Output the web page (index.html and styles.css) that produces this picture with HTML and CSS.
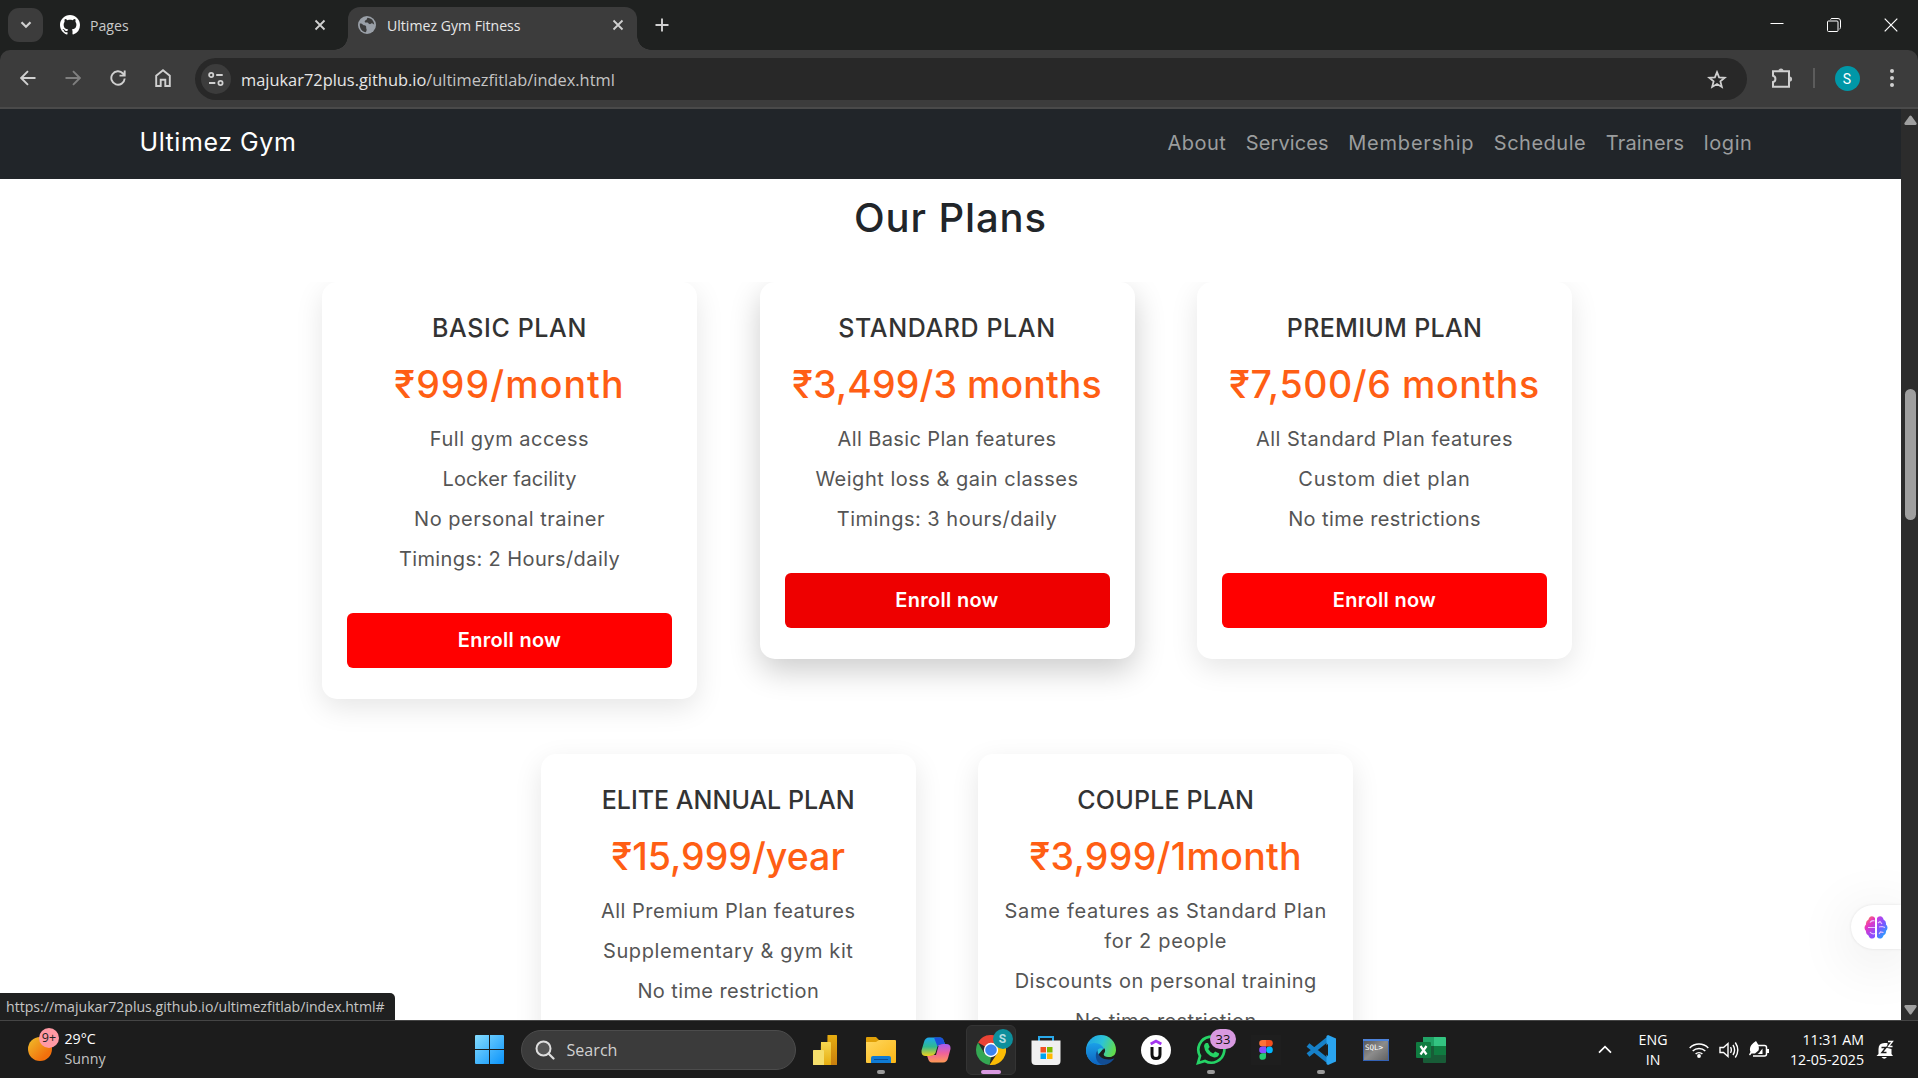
FILE: index.html
```html
<!DOCTYPE html>
<html lang="en">
<head>
<meta charset="utf-8">
<title>Ultimez Gym Fitness</title>
<link rel="stylesheet" href="styles.css">
</head>
<body>
<header class="tabstrip">
  <div class="tab-search"><svg width="12" height="8" viewBox="0 0 12 8"><path d="M1.5 1.2 6 5.7l4.500-4.500" class="ln" stroke-width="2.200"/></svg></div>
  <div class="tab tab-idle">
    <svg class="fav" width="20" height="20" viewBox="0 0 16 16"><path fill="#fff" d="M8 0C3.580 0 0 3.580 0 8c0 3.540 2.290 6.530 5.470 7.590.4.070.55-.17.55-.38 0-.19-.01-.82-.01-1.490-2.010.37-2.530-.49-2.690-.94-.09-.23-.48-.94-.82-1.130-.28-.15-.68-.52-.01-.53.63-.01 1.080.58 1.230.82.72 1.210 1.870.87 2.330.66.070-.52.28-.87.51-1.070-1.780-.2-3.640-.89-3.640-3.950 0-.87.31-1.590.82-2.150-.08-.2-.36-1.020.08-2.120 0 0 .67-.21 2.200.82.64-.18 1.320-.27 2-.27s1.360.09 2 .27c1.530-1.040 2.200-.82 2.200-.82.44 1.100.16 1.920.08 2.120.51.56.82 1.270.82 2.150 0 3.070-1.870 3.750-3.650 3.950.29.25.54.73.54 1.480 0 1.070-.01 1.930-.01 2.200 0 .21.15.46.55.38A8.010 8.010 0 0 0 16 8c0-4.420-3.580-8-8-8z"/></svg>
    <span class="tab-title">Pages</span>
    <svg width="12" height="12" viewBox="0 0 12 12"><path d="M1.500 1.500l9 9m0-9l-9 9" class="ln" stroke-width="1.800"/></svg>
  </div>
  <div class="tab tab-active">
    <svg class="fav" width="18" height="18" viewBox="0 0 18 18"><circle cx="9" cy="9" r="9" fill="#9aa0a8"/><path fill="#3c3c3c" d="M1.800 7.500c1.500-.4 2.400.2 3.200 1.300.7.900 2.200.3 2.900 1.200.7 1-.1 2 .6 3 .4.800 0 2-.6 3.200C4.500 16 1.300 12.500 1.800 7.500zM9.500 1.800c-1 1-.2 1.700-1.300 2.300-1 .5-1.700.8-1.400 1.900.2 1 1.700.4 2.600.5 1 .2 1 1.300 2.100 1.600 1.200.4 1.300-1 2.400-.8.900.1 1.700.8 2.300 1.500C16 4.900 13.400 2 9.500 1.800z"/></svg>
    <span class="tab-title">Ultimez Gym Fitness</span>
    <svg width="12" height="12" viewBox="0 0 12 12"><path d="M1.500 1.500l9 9m0-9l-9 9" class="ln" stroke-width="1.800"/></svg>
  </div>
  <svg class="new-tab" width="14" height="14" viewBox="0 0 14 14"><path d="M7 .5v13M.5 7h13" class="ln" stroke-width="1.900"/></svg>
  <div class="window-buttons">
    <svg width="14" height="14" viewBox="0 0 14 14"><path d="M.5 5.500h13" stroke="#fff" fill="none"/></svg>
    <svg width="14" height="14" viewBox="0 0 14 14"><path d="M3.500 1.500q.3-1 1.500-1h6q2.500 0 2.500 2.500v6.500q0 1.200-1 1.500" stroke="#fff" fill="none"/><rect x=".5" y="3" width="10.500" height="10.500" rx="1" stroke="#fff" fill="none"/></svg>
    <svg width="14" height="14" viewBox="0 0 14 14"><path d="M.7.700l12.600 12.600m0-12.600L.7 13.300" stroke="#fff" stroke-width="1.200" fill="none"/></svg>
  </div>
</header>

<div class="toolbar">
  <div class="tool"><svg width="16" height="16" viewBox="0 0 16 16"><path d="M15.500 8H1.500M8 1.200 1.200 8 8 14.800" class="ln" stroke-width="1.900"/></svg></div>
  <div class="tool dim"><svg width="16" height="16" viewBox="0 0 16 16"><path d="M.5 8h14M8 1.200 14.800 8 8 14.800" class="ln" stroke-width="1.900"/></svg></div>
  <div class="tool"><svg width="16" height="16" viewBox="0 0 16 16"><path d="M14.700 8.500A6.700 6.700 0 1 1 13 3.500l1.500 1.600M14.700.5V5.600H9.500" class="ln" stroke-width="1.900"/></svg></div>
  <div class="tool"><svg width="16" height="18" viewBox="0 0 16 18"><path d="M1.200 17V6.800L8 1.300l6.800 5.500V17H10.300V10.800H5.700V17z" class="ln" stroke-width="1.900"/></svg></div>
  <div class="omnibox">
    <div class="site-info"><svg width="16" height="14" viewBox="0 0 16 14"><g class="ln" stroke-width="1.800"><circle cx="3.200" cy="3" r="2.100"/><path d="M8.200 3h6.500M1 11h6.300"/><circle cx="12.500" cy="11" r="2.100"/></g></svg></div>
    <span class="url">majukar72plus.github.io<span class="url-path">/ultimezfitlab/index.html</span></span>
    <svg class="star" width="20" height="19" viewBox="0 0 20 19"><path d="M10 2.200l2.100 5.200 5.600.4-4.300 3.600 1.400 5.500L10 14l-4.800 2.900 1.400-5.500L2.300 7.800l5.600-.4z" class="ln" stroke-width="1.800"/></svg>
  </div>
  <svg class="puzzle" width="22" height="22" viewBox="0 0 22 22"><path d="M2 4.300H18V19.700H2V15a3.200 3.200 0 0 0 0-6.200z" class="ln" stroke-width="2"/><path fill="#c7c7c7" d="M7.500 4a2.500 2.600 0 0 1 5 0zM18.500 9.400a2.600 2.600 0 0 1 0 5.200z"/></svg>
  <i class="divider"></i>
  <div class="avatar">S</div>
  <svg class="dots" width="4" height="18" viewBox="0 0 4 18"><g fill="#d0d0d0"><circle cx="2" cy="2" r="2"/><circle cx="2" cy="9" r="2"/><circle cx="2" cy="16" r="2"/></g></svg>
</div>

<div class="viewport">
  <div class="page">
    <nav class="site-nav">
      <span class="brand">Ultimez Gym</span>
      <div class="links"><a class="ls-5">About</a><a class="ls-1">Services</a><a class="ls-8">Membership</a><a class="ls-5">Schedule</a><a class="ls-2">Trainers</a><a class="ls-6">login</a></div>
    </nav>
    <h2 class="heading">Our Plans</h2>
    <div class="plans">
      <article class="card">
        <h3 class="ls-6">BASIC PLAN</h3>
        <p class="price ls-11">₹999/month</p>
        <ul><li class="ls-5">Full gym access</li><li class="ls-1">Locker facility</li><li class="ls-5">No personal trainer</li><li class="ls-4">Timings: 2 Hours/daily</li></ul>
        <a class="enroll">Enroll now</a>
      </article>
      <article class="card lifted">
        <h3 class="ls-6">STANDARD PLAN</h3>
        <p class="price ls-1">₹3,499/3 months</p>
        <ul><li class="ls-4">All Basic Plan features</li><li class="ls-5">Weight loss &amp; gain classes</li><li class="ls-5">Timings: 3 hours/daily</li></ul>
        <a class="enroll hovered">Enroll now</a>
      </article>
      <article class="card">
        <h3 class="ls-3">PREMIUM PLAN</h3>
        <p class="price ls-6">₹7,500/6 months</p>
        <ul><li class="ls-5">All Standard Plan features</li><li class="ls-8">Custom diet plan</li><li class="ls-4">No time restrictions</li></ul>
        <a class="enroll">Enroll now</a>
      </article>
      <article class="card">
        <h3>ELITE ANNUAL PLAN</h3>
        <p class="price">₹15,999/year</p>
        <ul><li class="ls-5">All Premium Plan features</li><li class="ls-6">Supplementary &amp; gym kit</li><li class="ls-4">No time restriction</li></ul>
      </article>
      <article class="card">
        <h3 class="ls-2">COUPLE PLAN</h3>
        <p class="price ls-3">₹3,999/1month</p>
        <ul><li class="ls-7">Same features as Standard Plan<br>for 2 people</li><li class="ls-5">Discounts on personal training</li><li class="ls-4">No time restriction</li></ul>
      </article>
    </div>
  </div>
  <div class="scrollbar">
    <svg width="13" height="10" viewBox="0 0 13 10"><path d="M5.500 1q1-1.200 2 0l5 7q.6 1.500-1 2H1.500Q-.1 9.500.5 8z" fill="#9f9f9f"/></svg>
    <i class="thumb"></i>
    <svg width="13" height="10" viewBox="0 0 13 10"><path d="M5.500 9q1 1.200 2 0l5-7q.6-1.500-1-2H1.500Q-.1.500.5 2z" fill="#9f9f9f"/></svg>
  </div>
  <div class="brain">
    <svg width="24" height="23" viewBox="0 0 24 23"><defs><linearGradient id="bl" x1="0" y1="0" x2=".5" y2="1"><stop offset="0" stop-color="#ff9a2e"/><stop offset=".45" stop-color="#e835c0"/><stop offset="1" stop-color="#8a4dff"/></linearGradient><linearGradient id="br" x1="0" y1="0" x2=".6" y2="1"><stop offset="0" stop-color="#d43be0"/><stop offset=".5" stop-color="#7a55ff"/><stop offset="1" stop-color="#22a6ff"/></linearGradient></defs><path fill="url(#bl)" d="M11 2v19q-2 2.500-5 1-1-1-1.500-2.500Q1.500 18 2 15-1 11.500 2 8.500 1.500 5 4.500 3.500 5 .5 8 .3 10 .3 11 2z"/><path fill="url(#br)" d="M13 2v19q2 2.500 5 1 1-1 1.500-2.500Q22.500 18 22 15q3-3.500 0-6.500.5-3.500-2.500-5Q19 .5 16 .3 14 .3 13 2z"/><path d="M10.500 5Q8 4 6 6.500M4 11.500h7M6 16q2 2.500 5 1.500M14 7l2-1.500L18 8M15 11l3-.5 3 1M15 18l1.500-2 3 .5" stroke="#e9c4ff" stroke-width="1.200" fill="none"/></svg>
  </div>
  <div class="status">https://majukar72plus.github.io/ultimezfitlab/index.html#</div>
</div>

<footer class="taskbar">
  <div class="weather">
    <div class="sun"><i class="badge">9+</i></div>
    <div class="lines"><span class="bright">29°C</span><span class="soft">Sunny</span></div>
  </div>
  <svg class="start" width="29" height="29" viewBox="0 0 29 29"><defs><linearGradient id="w" x1="0" y1="0" x2="1" y2="1" gradientUnits="objectBoundingBox"><stop offset="0" stop-color="#85dcff"/><stop offset="1" stop-color="#0a93fb"/></linearGradient></defs><path fill="url(#w)" d="M1 0h13v14H0V1q0-1 1-1zM15 0h13q1 0 1 1v13H15zM0 15h14v14H1q-1 0-1-1zM15 15h14v13q0 1-1 1H15z"/></svg>
  <div class="search"><svg width="20" height="20" viewBox="0 0 20 20"><circle cx="8.500" cy="8.500" r="7" stroke="#dedede" stroke-width="2" fill="#555"/><path d="M13.500 13.500l5 5" stroke="#dedede" stroke-width="2.200" stroke-linecap="round"/></svg><span>Search</span></div>
  <div class="apps">
    <div class="app"><svg width="30" height="30" viewBox="0 0 30 30"><defs><linearGradient id="p1" x1="0" y1="0" x2="0" y2="1"><stop offset="0" stop-color="#e6ad10"/><stop offset="1" stop-color="#c87e0e"/></linearGradient><linearGradient id="p2" x1="0" y1="0" x2="0" y2="1"><stop offset="0" stop-color="#f6d751"/><stop offset="1" stop-color="#e6ad10"/></linearGradient></defs><path fill="url(#p1)" d="M16.500 0h9q.5 0 .5.500V29.500q0 .5-.5.500H16z"/><path fill="url(#p2)" d="M10 7h9q1 0 1 1v22H9.500z"/><path fill="#f5de6b" d="M2.500 15H12q1 0 1 1v14H2.500q-.5 0-.5-.5v-14q0-.5.500-.5z"/></svg></div>
    <div class="app open"><svg width="30" height="30" viewBox="0 0 30 30"><defs><linearGradient id="f" x1="0" y1="0" x2="1" y2="1"><stop offset="0" stop-color="#ffd75e"/><stop offset="1" stop-color="#fbb615"/></linearGradient></defs><path fill="#e0a008" d="M1 2h9l3 3h16v8H0V3q0-1 1-1z"/><path fill="url(#f)" d="M0 7h10l3-2h16q1 0 1 1v21q0 1-1 1H1q-1 0-1-1z"/><path fill="#0f7bd4" d="M7 21h16q2 0 2 2v5H5v-5q0-2 2-2z"/><path d="M8 24.500h14" stroke="#0a4d96"/></svg></div>
    <div class="app"><svg width="30" height="30" viewBox="0 0 30 30"><defs><linearGradient id="c1" x1="0" y1="0" x2="0" y2="1"><stop offset="0" stop-color="#1ea7f0"/><stop offset=".5" stop-color="#2fb98f"/><stop offset="1" stop-color="#f4d01b"/></linearGradient><linearGradient id="c2" x1="0" y1="0" x2="0" y2="1"><stop offset="0" stop-color="#a45cf2"/><stop offset=".5" stop-color="#f0619a"/><stop offset="1" stop-color="#ff9a55"/></linearGradient></defs><path fill="url(#c2)" d="M22 9h3q5 0 4.500 5l-2.300 8.500Q26 27.500 22 27.500H11q-3 0-4-4l-1-3h4q3 0 4-4l1.500-4.500Q17 9 22 9z"/><path fill="#1c1c1c" d="M13.500 11h4l-2.500 9h-4z"/><path fill="url(#c1)" d="M8 2.500h11q3 0 4 4L24 9h-4q-3 0-4 4l-1.500 5Q13 21 8 21H5q-5 0-4.500-5.500L3 7Q4.200 2.500 8 2.500z"/><path fill="#1b50dc" d="M13 2.500h6q3 0 4 4L24 9h-4q-2.500 0-3.500 2.500z"/></svg></div>
    <div class="app current"><svg width="30" height="30" viewBox="0 0 30 30"><path fill="#ea4335" d="M15 15L2 7.500a15 15 0 0 1 26 0z"/><path fill="#fbbc05" d="M15 8h13.300A15 15 0 0 1 13.500 29.900L21.500 18z"/><path fill="#34a853" d="M2 7.500L8.500 18.500 15 22 13.500 29.900A15 15 0 0 1 2 7.500z"/><circle cx="15" cy="15" r="7.200" fill="#fff"/><circle cx="15" cy="15" r="5.800" fill="#3b82f0"/></svg><i class="profile">S</i></div>
    <div class="app"><svg width="30" height="30" viewBox="0 0 30 30"><path d="M8 6V2h14v4" fill="none" stroke="#29a9ea" stroke-width="2"/><path fill="#f0f0f0" d="M.5 5.500h29V26q0 4-4 4h-21q-4 0-4-4z"/><path fill="#f25022" d="M9.500 12H15v5.500H9.500z"/><path fill="#7fba00" d="M16 12h5.500v5.500H16z"/><path fill="#00a4ef" d="M9.500 18.500H15V24H9.500z"/><path fill="#ffb900" d="M16 18.500h5.500V24H16z"/></svg></div>
    <div class="app"><svg width="30" height="30" viewBox="0 0 30 30"><defs><linearGradient id="e1" x1="0" y1="0" x2="1" y2=".4"><stop offset="0" stop-color="#1e9de8"/><stop offset=".55" stop-color="#2cc3d8"/><stop offset="1" stop-color="#62dc4c"/></linearGradient><linearGradient id="e2" x1="0" y1="0" x2="0" y2="1"><stop offset="0" stop-color="#1ba0e8"/><stop offset="1" stop-color="#0c62c0"/></linearGradient></defs><circle cx="15" cy="15" r="15" fill="url(#e1)"/><path fill="#1c1c1c" d="M30 16c0 4-4 6.500-8 6-3-.3-5-1.500-4-3.500 1.500-2 1.500-4 0-5.500L12 20l8 11 11-7z"/><path fill="url(#e2)" d="M0 15C1 8 8 7 12 8.500c4 1.500 6 4 6 6.500-1-2-4-2.500-6-.5-3 3-1 10 6 12.500l-1 3C7 31 0 24 0 15z"/><path fill="#124d94" d="M11.500 15c-4 6-.5 14 5.500 15 5 0 9-3 11.500-7-6 3.500-17 1-17-8z"/></svg></div>
    <div class="app"><svg width="30" height="30" viewBox="0 0 30 30"><circle cx="15" cy="15" r="15" fill="#fff"/><path d="M9.700 9L15 6l5.300 3" fill="none" stroke="#a435f0" stroke-width="2.800"/><path d="M11 12v7.500q0 4 4 4t4-4V12" fill="none" stroke="#111" stroke-width="3"/></svg></div>
    <div class="app open"><svg width="30" height="30" viewBox="0 0 30 30"><path d="M2 28L4 21A13 13 0 1 1 9 26z" fill="none" stroke="#25d366" stroke-width="2.700"/><path fill="#25d366" d="M10 8h2l1.700 4-1.500 2q2 3.500 5 4.500l2-2 4 2q-.5 4-5 4Q9 20 8 11q.5-2.500 2-3z"/></svg><i class="count">33</i></div>
    <div class="app"><svg width="30" height="30" viewBox="0 0 30 30"><rect width="30" height="30" fill="#1e1e1e"/><path fill="#ff7237" d="M11.500 5H15v6.600h-3.500a3.300 3.300 0 0 1 0-6.600z"/><path fill="#f24e1e" d="M15 5h3.500a3.300 3.300 0 0 1 0 6.600H15z"/><path fill="#874fff" d="M11.500 11.600H15v6.600h-3.500a3.300 3.300 0 0 1 0-6.600z"/><circle cx="18.500" cy="14.900" r="3.300" fill="#00b6ff"/><path fill="#24cb71" d="M11.500 18.200H15v3.300a3.300 3.300 0 1 1-3.500-3.300z"/></svg></div>
    <div class="app open"><svg width="30" height="30" viewBox="0 0 30 30"><path d="M2 10l20 16M2 20L22 4" stroke="#1680c8" stroke-width="4.500"/><path fill="#2aa4ef" d="M22 0l8 3.500v23L22 30l-1.500-1V1z"/><path fill="#1c1c1c" d="M22 9v12l-8-6z"/></svg></div>
    <div class="app"><svg width="30" height="30" viewBox="0 0 30 30"><defs><linearGradient id="s" x1="0" y1="0" x2="1" y2="1"><stop offset="0" stop-color="#555"/><stop offset=".5" stop-color="#8c8c8c"/><stop offset="1" stop-color="#606060"/></linearGradient></defs><rect x="2.500" y="4.500" width="25" height="21" fill="url(#s)" stroke="#3462b5"/><path d="M2 5h26" stroke="#4d83da" stroke-width="2"/><text x="4" y="14.500" class="sql">SQL&gt;</text></svg></div>
    <div class="app"><svg width="30" height="30" viewBox="0 0 30 30"><path fill="#21a366" d="M7 2h12v9H7z"/><path fill="#33c481" d="M18 2h11q1 0 1 1v8H18z"/><path fill="#107c41" d="M18 11h12v9H18z"/><path fill="#185c37" d="M7 11h11v9h12v7q0 1-1 1H8q-1 0-1-1z"/><rect y="7" width="15" height="16" rx="1" fill="#107c41"/><path d="M4.500 11l6 8.500m0-8.500l-6 8.500" stroke="#fff" stroke-width="2.200"/></svg></div>
  </div>
  <div class="tray">
    <svg class="chev" width="14" height="9" viewBox="0 0 14 9"><path d="M1 7.700L7 1.700l6 6" stroke="#fff" stroke-width="1.700" fill="none"/></svg>
    <div class="lines lang"><span>ENG</span><span>IN</span></div>
    <svg width="20" height="16" viewBox="0 0 20 16"><g fill="none" stroke="#fff" stroke-width="1.500"><path d="M.7 6a13 13 0 0 1 18.600 0M3.700 9a9 9 0 0 1 12.600 0M6.600 12a5 5 0 0 1 6.800 0"/></g><circle cx="10" cy="14" r="1.900" fill="#fff"/></svg>
    <svg width="20" height="18" viewBox="0 0 20 18"><g fill="none" stroke="#fff" stroke-width="1.400"><path d="M1 6.500h3.500L9 2.500v13L4.500 11.500H1z"/><path d="M11.500 6.200q1.700 2.800 0 5.600M14 4q3.200 5 0 10M16.300 1.500q5 7.500 0 15"/></g></svg>
    <svg width="20" height="17" viewBox="0 0 20 17"><path fill="none" stroke="#fff" stroke-width="1.500" d="M9 4.500h6.500q2 0 2 2V13q0 2-2 2H4"/><path fill="#fff" d="M18 8h2v4h-2zM7 0q4 5 2.500 9.500L6 12.500H2.500L1 14.500 0 13.500 1.500 11Q-1 5 7 0z"/><path fill="#fff" d="M10 12l3.500-4.500V13H8.500z"/></svg>
    <div class="lines clock"><span>11:31 AM</span><span>12-05-2025</span></div>
    <svg width="18" height="20" viewBox="0 0 18 20"><path fill="#fff" d="M2.500 14V9q0-6 6-6h3v5l4 1v5l1.500 2H.5zM5.500 17h5.500q-2.700 3.500-5.500 0z"/><path d="M12 1.500h4.500l-4 5h4" stroke="#1c1c1c" stroke-width="3" fill="none"/><path d="M12 1.500h4.500l-4 5h4" stroke="#fff" stroke-width="1.300" fill="none"/><path d="M5.500 7.500h4.500l-4 5h4.500" stroke="#1c1c1c" stroke-width="1.500" fill="none"/></svg>
  </div>
</footer>
</body>
</html>
```
FILE: styles.css
```css
* { box-sizing: border-box; }
body { margin: 0; width: 1918px; height: 1078px; overflow: hidden; display: flex; flex-direction: column; background: #1f2120; font-family: "Open Sans", sans-serif; }
svg { display: block; flex: none; }
i { font-style: normal; }
.ln { fill: none; stroke: #d0d0d0; }

/* Browser tab strip */
.tabstrip { height: 50px; background: #1f2120; display: flex; align-items: center; }
.tab-search { width: 35px; height: 34px; margin-left: 8px; border-radius: 11px; background: #3c3c3c; display: flex; align-items: center; justify-content: center; }
.tab { display: flex; align-items: center; font-size: 14.1px; color: #c9c9c9; }
.tab-title { flex: 1; white-space: nowrap; }
.tab-idle { width: 283px; margin-right: 22px; padding-left: 17px; }
.tab-idle .fav { margin-right: 10px; }
.tab-active { position: relative; width: 289px; height: 43px; align-self: flex-end; padding: 0 13px 7px 10px; border-radius: 12px 12px 0 0; background: #3c3c3c; color: #e6e6e6; }
.tab-active .fav { margin-right: 11px; }
.tab-active::before, .tab-active::after { content: ""; position: absolute; bottom: 0; width: 14px; height: 14px; }
.tab-active::before { left: -14px; background: radial-gradient(circle at 0 0, transparent 13.5px, #3c3c3c 14px); }
.tab-active::after { right: -14px; background: radial-gradient(circle at 100% 0, transparent 13.5px, #3c3c3c 14px); }
.new-tab { margin-left: 18px; }
.window-buttons { margin-left: auto; padding-right: 20px; display: flex; gap: 43px; }

/* Address toolbar */
.toolbar { height: 59px; padding: 0 24px 1px 5px; background: #3c3c3c; border-bottom: 2px solid #4a4a4a; border-radius: 10px 10px 0 0; display: flex; align-items: center; }
.tool { width: 45px; display: flex; justify-content: center; }
.dim { opacity: .45; }
.omnibox { width: 1552px; height: 42px; margin: 2px 0 0 10px; padding: 0 20px 0 6px; border-radius: 21px; background: #282828; display: flex; align-items: center; }
.site-info { width: 30px; height: 30px; border-radius: 50%; background: #3c3c3c; display: flex; align-items: center; justify-content: center; }
.url { flex: 1; margin-left: 10px; font-size: 16.4px; color: #e6e6e6; }
.url-path { color: #c4c4c4; }
.puzzle { margin-left: 24px; }
.divider { width: 2px; height: 20px; margin-left: 20px; background: #5c5c5c; }
.avatar { width: 25px; height: 25px; margin: 0 auto 0 19.500px; border-radius: 50%; background: #0097a7; color: #fff; font: 14px/26px Roboto, sans-serif; text-align: center; }

/* Web page */
.viewport { position: relative; height: 911px; display: flex; background: #fff; overflow: hidden; }
.page { width: 1901px; font-family: Inter, sans-serif; }
.site-nav { height: 70px; padding: 0 148.500px 3px 139.500px; background: #212529; display: flex; align-items: center; justify-content: space-between; }
.brand { padding-bottom: 1px; font-size: 25px; letter-spacing: .55px; color: #fff; }
.links { display: flex; gap: 19.500px; font-size: 20px; color: #9b9d9e; }
.heading { margin: 15.400px 0 39.600px; font-size: 40px; line-height: 48px; font-weight: 500; letter-spacing: .9px; text-align: center; color: #212529; }
.plans { height: 738px; padding: 0 207px 0 200px; overflow: hidden; display: flex; flex-wrap: wrap; justify-content: center; align-items: flex-start; align-content: flex-start; gap: 55px 62.500px; }
.card { width: 375px; min-height: 377px; padding: 31px 25px; border-radius: 15px; background: #fff; box-shadow: 0 9px 28px rgba(0, 0, 0, .1); text-align: center; white-space: nowrap; }
.lifted { box-shadow: 0 12px 31px rgba(0, 0, 0, .2); }
.card h3 { margin: 0 0 19px; font-size: 25px; line-height: 30px; font-weight: 500; color: #333; }
.price { margin: 0 -20px 16.700px; font-size: 37.500px; line-height: 45px; font-weight: 500; color: #ff5e14; }
.card ul { margin: 0 0 39.300px; padding: 0; list-style: none; display: grid; gap: 10px; font-size: 20px; line-height: 30px; color: #555; }
.enroll { display: block; height: 55px; border-radius: 6px; background: #f00; color: #fff; font-size: 20px; line-height: 54px; font-weight: 600; letter-spacing: .3px; }
.hovered { background: #e00; }
.ls-1 { letter-spacing: .1px; }
.ls-2 { letter-spacing: .2px; }
.ls-3 { letter-spacing: .3px; }
.ls-4 { letter-spacing: .4px; }
.ls-5 { letter-spacing: .5px; }
.ls-6 { letter-spacing: .6px; }
.ls-7 { letter-spacing: .7px; }
.ls-8 { letter-spacing: .8px; }
.ls-11 { letter-spacing: 1.100px; }

.scrollbar { width: 17px; padding: 6px 0 5px 1px; background: #2c2c2c; display: flex; flex-direction: column; align-items: center; justify-content: space-between; }
.thumb { width: 11px; height: 131px; margin: 264px 0 auto; border-radius: 6px; background: #9f9f9f; }
.brain { position: absolute; right: 17px; top: 796px; width: 50px; height: 44px; padding: 11px 0 0 13px; border-radius: 22px 0 0 22px; background: #fff; box-shadow: 0 10px 60px rgba(0, 0, 0, .12), 0 0 3px rgba(0, 0, 0, .1); clip-path: inset(-90px 0 -90px -90px); }
.status { position: absolute; left: 0; bottom: 0; width: 395px; height: 27px; padding-left: 6px; border-radius: 0 5px 0 0; background: #1f2020; color: #c6c6c6; font-size: 14.100px; line-height: 27px; white-space: nowrap; }

/* Windows taskbar */
.taskbar { height: 58px; background: #1c1c1c; border-top: 1px solid #454545; display: flex; align-items: center; font-size: 14.200px; color: #fff; }
.lines { display: flex; flex-direction: column; line-height: 20px; }
.weather { width: 475px; padding: 0 0 1px 28px; display: flex; align-items: center; gap: 12.500px; }
.sun { position: relative; width: 24px; height: 24px; border-radius: 50%; background: linear-gradient(135deg, #efc02c, #f2700c 75%); }
.badge { position: absolute; left: 11px; top: -9px; width: 20px; height: 20px; border-radius: 50%; background: #ff99a4; color: #222; font-size: 12.500px; line-height: 20px; text-align: center; }
.soft { color: #c4c4c4; }
.search { width: 275px; height: 40px; margin-left: 17px; padding: 1px 0 0 13px; border-radius: 20px; background: #3b3b3b; border: 1px solid #4c4c4c; display: flex; align-items: center; gap: 11.500px; font-size: 16.100px; color: #d0d0d0; }
.apps { display: flex; margin-left: 2.500px; }
.app { position: relative; width: 55px; height: 50px; display: flex; align-items: center; justify-content: center; }
.open::after, .current::after { content: ""; position: absolute; left: 23.500px; bottom: 1px; width: 8px; height: 4px; border-radius: 2px; background: #9a9a9a; }
.current::before { content: ""; position: absolute; inset: 0 2.500px; border: 1px solid #343434; border-radius: 6px; background: #2a2a2a; }
.current svg { position: relative; }
.current::after { left: 17.500px; width: 20px; background: #d899e0; }
.profile { position: absolute; left: 29px; top: 4px; width: 20px; height: 20px; border-radius: 50%; background: #0d8f9c; color: #b5dde1; font: 700 12px/20px Roboto, sans-serif; text-align: center; }
.count { position: absolute; left: 26.500px; top: 4px; width: 26px; height: 20px; border-radius: 10px; background: #d899e0; color: #111; font-size: 13px; line-height: 20px; text-align: center; }
.sql { font-family: "DejaVu Sans Mono", monospace; font-size: 7.500px; fill: #fff; }
.tray { margin-left: auto; padding-right: 24px; display: flex; align-items: center; }
.lang { margin: 0 22px 0 27px; text-align: center; }
.tray svg + svg { margin-left: 10px; }
.clock { margin: 0 12px 0 20.500px; text-align: right; }
```
